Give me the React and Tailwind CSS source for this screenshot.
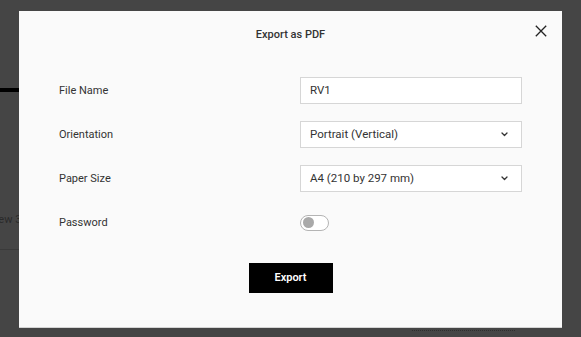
import React, { useState } from 'react';

const Chevron = () => (
  <svg width="7" height="5" viewBox="0 0 7 5" fill="none" className="shrink-0">
    <path d="M1 1l2.5 2.5L6 1" stroke="#333" strokeWidth="1.3" strokeLinecap="round" strokeLinejoin="round" />
  </svg>
);

const Row = ({ label, children }) => (
  <div className="flex items-center h-[27px]">
    <div className="w-[241px] pt-px text-[11px] text-[#333]">{label}</div>
    {children}
  </div>
);

const SelectBox = ({ value }) => (
  <div className="w-[222px] h-[27px] border border-[#d6d6d6] bg-white flex items-center justify-between pl-[9px] pr-[13px] text-[11.5px] text-[#333]">
    <span>{value}</span>
    <Chevron />
  </div>
);

export default function App() {
  const [on, setOn] = useState(false);

  return (
    <div className="relative w-[581px] h-[337px] overflow-hidden bg-[#454545]" style={{ fontFamily: 'Roboto, "Noto Sans", sans-serif' }}>
      {/* page behind the overlay */}
      <div className="flex flex-col">
        <div className="h-[88px]" />
        <div className="h-[4px] w-[40px] bg-black" />
        <div className="h-[121px]" />
        <div className="text-[11px] leading-[14px] text-[#2a2a2a] -ml-[26px]">Preview 3</div>
        <div className="h-[22px]" />
        <div className="h-px w-[40px] bg-[#3a3a3a]" />
        <div className="h-[80px]" />
        <div className="ml-[412px] w-[103px] border-t border-dotted border-[#2e2e2e]" />
      </div>

      {/* modal */}
      <div className="absolute inset-0 flex justify-center pt-[11px]">
        <div className="relative w-[543px] h-[317px] bg-[#fafafa] border-b border-[#d4d4d4] flex flex-col">
          <button className="absolute right-[15px] top-[14px] w-[12px] h-[12px]">
            <svg width="12" height="12" viewBox="0 0 12 12" fill="none">
              <path d="M0.8 0.8l10.4 10.4M11.2 0.8L0.8 11.2" stroke="#222" strokeWidth="1.3" />
            </svg>
          </button>

          <div className="pt-[17px] text-center text-[11px] leading-[14px] font-medium text-[#333]">Export as PDF</div>

          <div className="mt-[35px] pl-[40px] flex flex-col gap-[17px]">
            <Row label="File Name">
              <div className="w-[222px] h-[27px] border border-[#d6d6d6] bg-white flex items-center pl-[9px] text-[11.5px] text-[#333]">RV1</div>
            </Row>
            <Row label="Orientation">
              <SelectBox value="Portrait (Vertical)" />
            </Row>
            <Row label="Paper Size">
              <SelectBox value="A4 (210 by 297 mm)" />
            </Row>
            <Row label="Password">
              <button
                onClick={() => setOn(!on)}
                className="w-[29px] h-[16px] rounded-full border border-[#b4b4b4] bg-white flex items-center px-[2px]"
              >
                <span className="w-[11px] h-[11px] rounded-full bg-[#a9a9a9]" />
              </button>
            </Row>
          </div>

          <div className="mt-[27px] flex justify-center">
            <button className="w-[84px] h-[30px] bg-black text-white text-[11px] font-semibold">Export</button>
          </div>
        </div>
      </div>
    </div>
  );
}
